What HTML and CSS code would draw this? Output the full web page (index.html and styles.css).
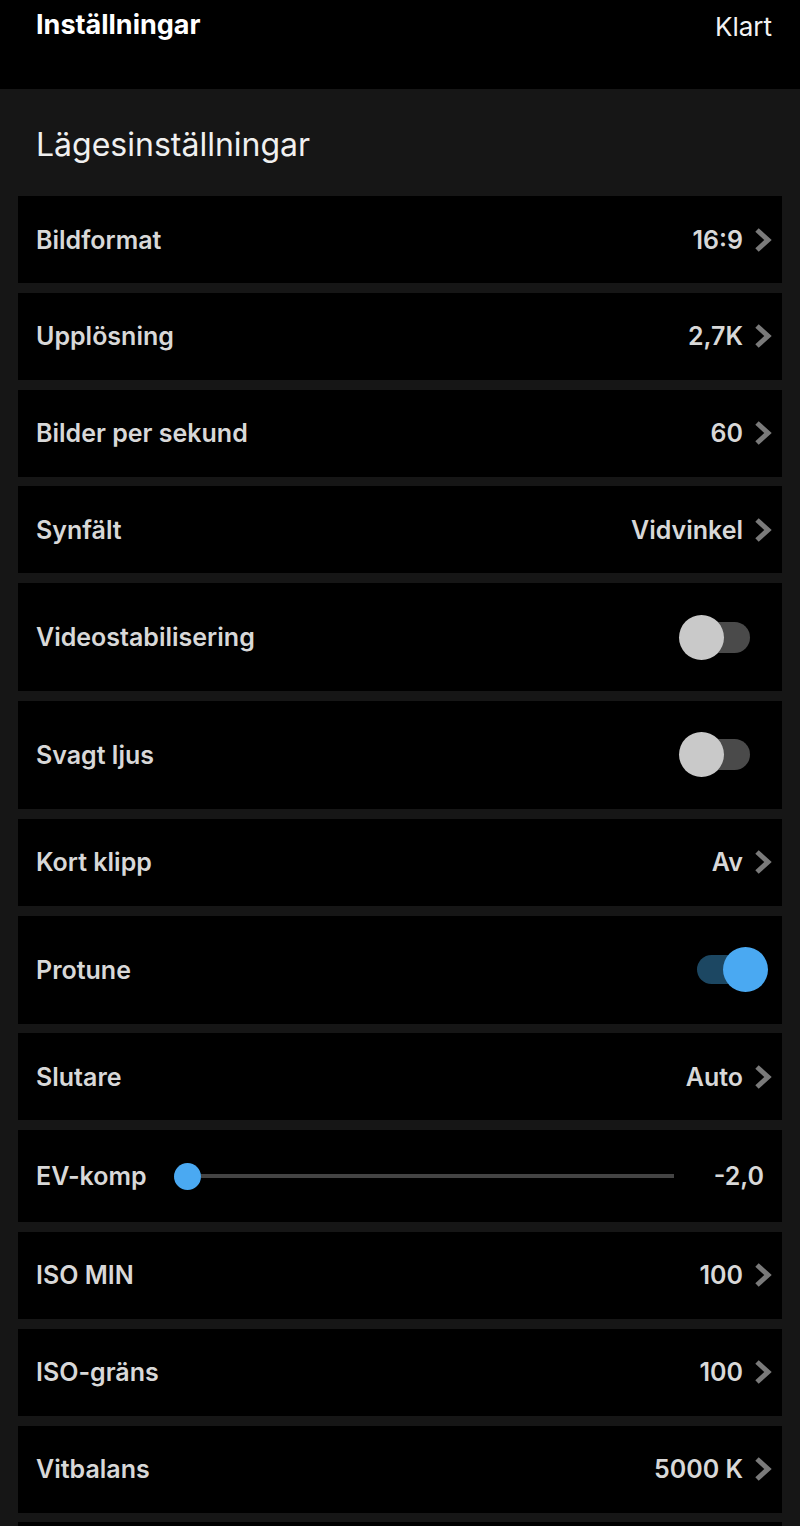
FILE: index.html
```html
<!doctype html>
<html lang="sv">
    <head>
        <meta charset="UTF-8" />
        <meta name="viewport" content="width=device-width, initial-scale=1.0" />
        <title>Inställningar</title>
        <link rel="stylesheet" href="styles.css">
    </head>
    <body>
        <!-- Top bar -->
        <header class="topbar">
            <h1 class="topbar-title">Inställningar</h1>
            <span class="topbar-done">Klart</span>
        </header>

        <main class="content">
            <h2 class="section-title">Lägesinställningar</h2>

            <div class="rows">
                <div class="row">
                    <span class="label">Bildformat</span>
                    <span class="value">16:9</span>
                    <svg class="chevron" viewBox="0 0 18 26"><polyline points="3,3 14,13 3,23" /></svg>
                </div>
                <div class="row">
                    <span class="label">Upplösning</span>
                    <span class="value">2,7K</span>
                    <svg class="chevron" viewBox="0 0 18 26"><polyline points="3,3 14,13 3,23" /></svg>
                </div>
                <div class="row">
                    <span class="label">Bilder per sekund</span>
                    <span class="value">60</span>
                    <svg class="chevron" viewBox="0 0 18 26"><polyline points="3,3 14,13 3,23" /></svg>
                </div>
                <div class="row">
                    <span class="label">Synfält</span>
                    <span class="value">Vidvinkel</span>
                    <svg class="chevron" viewBox="0 0 18 26"><polyline points="3,3 14,13 3,23" /></svg>
                </div>
                <div class="row row-tall">
                    <span class="label">Videostabilisering</span>
                    <span class="toggle"><span class="track"></span><span class="knob"></span></span>
                </div>
                <div class="row row-tall">
                    <span class="label">Svagt ljus</span>
                    <span class="toggle"><span class="track"></span><span class="knob"></span></span>
                </div>
                <div class="row">
                    <span class="label">Kort klipp</span>
                    <span class="value">Av</span>
                    <svg class="chevron" viewBox="0 0 18 26"><polyline points="3,3 14,13 3,23" /></svg>
                </div>
                <div class="row row-tall">
                    <span class="label">Protune</span>
                    <span class="toggle on"><span class="track"></span><span class="knob"></span></span>
                </div>
                <div class="row">
                    <span class="label">Slutare</span>
                    <span class="value">Auto</span>
                    <svg class="chevron" viewBox="0 0 18 26"><polyline points="3,3 14,13 3,23" /></svg>
                </div>
                <div class="row row-slider">
                    <span class="label">EV-komp</span>
                    <span class="slider"><span class="slider-dot"></span><span class="slider-line"></span></span>
                    <span class="value">-2,0</span>
                </div>
                <div class="row">
                    <span class="label">ISO MIN</span>
                    <span class="value">100</span>
                    <svg class="chevron" viewBox="0 0 18 26"><polyline points="3,3 14,13 3,23" /></svg>
                </div>
                <div class="row">
                    <span class="label">ISO-gräns</span>
                    <span class="value">100</span>
                    <svg class="chevron" viewBox="0 0 18 26"><polyline points="3,3 14,13 3,23" /></svg>
                </div>
                <div class="row">
                    <span class="label">Vitbalans</span>
                    <span class="value">5000 K</span>
                    <svg class="chevron" viewBox="0 0 18 26"><polyline points="3,3 14,13 3,23" /></svg>
                </div>
                <!-- next row, only its top edge is on screen -->
                <div class="row"></div>
            </div>
        </main>
    </body>
</html>
```

FILE: styles.css
```css
/* Basic styling */
body {
    font-family: Inter, "Liberation Sans", sans-serif;
    background-color: #161616;
    color: #d8d8d8;
    margin: 0;
    padding: 0;
}

/* Top bar */
.topbar {
    background-color: #000;
    height: 89px;
    display: flex;
    justify-content: space-between;
    align-items: flex-start;
    padding: 0 28px 0 36px;
}
.topbar-title {
    margin: 8px 0 0;
    font-size: 27px;
    font-weight: 700;
    color: #fff;
}
.topbar-done {
    margin-top: 11px;
    font-size: 26px;
    color: #f2f2f2;
}

/* Section */
.content {
    padding: 0 18px;
}
.section-title {
    margin: 0;
    padding: 36px 0 0 18px;
    height: 71px;
    box-sizing: border-box;
    font-size: 32px;
    font-weight: 400;
    color: #f0f0f0;
}
.section-title {
    height: 107px;
}
.rows {
    display: flex;
    flex-direction: column;
    gap: 9.8px;
}
.row {
    background-color: #000;
    height: 87px;
    flex: none;
    display: flex;
    align-items: center;
    padding: 0 10px 0 18px;
    font-size: 25px;
    font-weight: 600;
}
.row-tall {
    height: 108px;
}
.row-slider {
    height: 92px;
    padding-right: 18px;
}
.label {
    flex: 1;
}
.value {
    margin-right: 11px;
}
.row-slider .label {
    flex: none;
}
.row-slider .value {
    margin-right: 0;
}
.chevron {
    width: 18px;
    height: 26px;
    fill: none;
    stroke: #7a7a7a;
    stroke-width: 5;
}

/* Toggles */
.toggle {
    position: relative;
    width: 71px;
    height: 45px;
    margin-right: 22px;
}
.toggle .track {
    position: absolute;
    left: 11px;
    right: 0;
    top: 7px;
    height: 31px;
    border-radius: 16px;
    background-color: #4a4a4a;
}
.toggle .knob {
    position: absolute;
    left: 0;
    top: 0;
    width: 45px;
    height: 45px;
    border-radius: 50%;
    background-color: #c9c9c9;
}
.toggle.on {
    margin-right: 4px;
}
.toggle.on .track {
    left: 0;
    right: 14px;
    top: 8px;
    height: 29px;
    background-color: #1c4762;
}
.toggle.on .knob {
    left: auto;
    right: 0;
    background-color: #4aa9f2;
}

/* EV slider */
.slider {
    flex: 1;
    display: flex;
    align-items: center;
    margin: 0 40px 0 27px;
}
.slider-dot {
    width: 27px;
    height: 27px;
    border-radius: 50%;
    background-color: #4aa9f2;
}
.slider-line {
    flex: 1;
    height: 4px;
    background-color: #444;
}
```
